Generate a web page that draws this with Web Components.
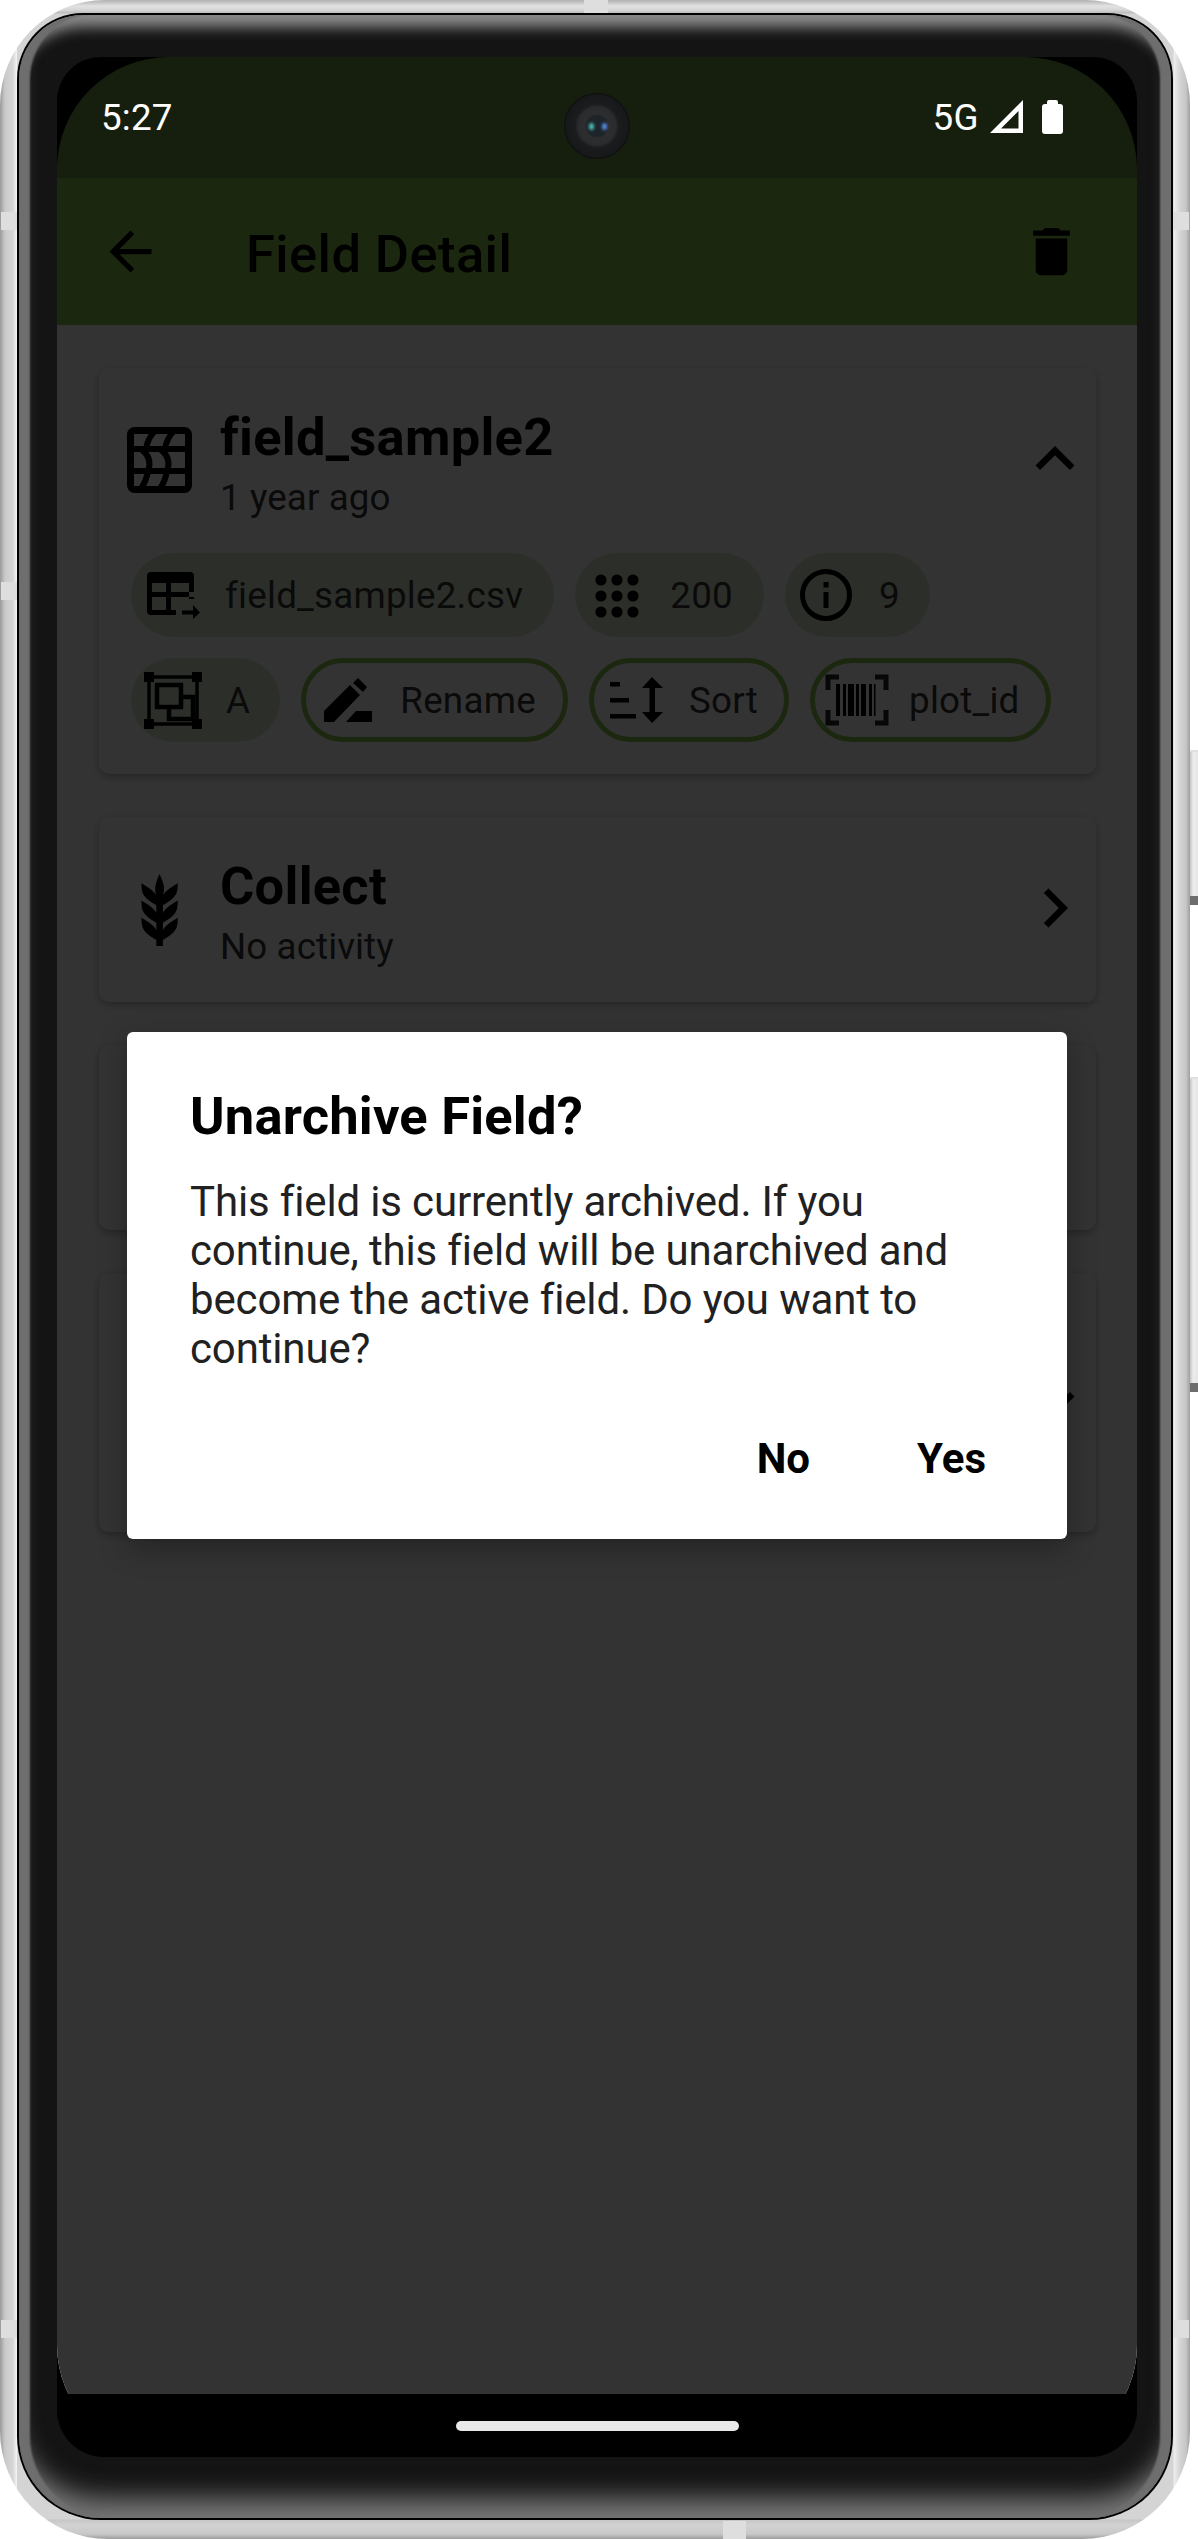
<!DOCTYPE html>
<html lang="en"><head><meta charset="utf-8"><title>Field Detail</title>
<style>
html,body{margin:0;padding:0;background:#fff}
body{width:1198px;height:2539px;overflow:hidden;font-family:Roboto,"Liberation Sans",sans-serif}
</style></head><body>
<phone-frame>
  <status-bar slot="status"></status-bar>
  <app-bar slot="main" heading="Field Detail"></app-bar>
  <page-body slot="main">
    <info-card style="--pt:38px;--pb:32px" icon="field" title-text="field_sample2" sub="1 year ago" trail="up">
      <div style="display:flex;gap:21px">
        <chip-pill style="--l:16px;--g:25px;--r:31px" icon="tablearrow">field_sample2.csv</chip-pill>
        <chip-pill style="--l:20px;--g:30px;--r:31px" icon="dots">200</chip-pill>
        <chip-pill style="--l:15px;--g:27px;--r:30px" icon="info">9</chip-pill>
      </div>
      <div style="display:flex;gap:21px">
        <chip-pill style="--l:13px;--g:24px;--r:30px" icon="select">A</chip-pill>
        <chip-pill outlined style="--l:18px;--g:28px;--r:27px" icon="rename">Rename</chip-pill>
        <chip-pill outlined style="--l:16px;--g:26px;--r:26px" icon="sort">Sort</chip-pill>
        <chip-pill outlined style="--l:10px;--g:20px;--r:26px" icon="barcode">plot_id</chip-pill>
      </div>
    </info-card>
    <info-card class="c" style="--h:185px;--tt:4px" icon="barley" title-text="Collect" sub="No activity" trail="right"></info-card>
    <info-card style="--h:185px"></info-card>
    <info-card style="--h:259px" trail="down"></info-card>
  </page-body>
  <alert-dialog slot="overlay" heading="Unarchive Field?" confirm="Yes" cancel="No">This field is currently archived. If you continue, this field will be unarchived and become the active field. Do you want to continue?</alert-dialog>
</phone-frame>
<script>
const ICONS={
 back:[63,63,'<path transform="scale(2.625)" d="M20 11H7.83l5.59-5.59L12 4l-8 8 8 8 1.41-1.41L7.83 13H20v-2z"/>'],
 trash:[63,63,'<path transform="scale(2.625)" d="M6 19c0 1.1.9 2 2 2h8c1.1 0 2-.9 2-2V7H6v12zM19 4h-3.5l-1-1h-5l-1 1H5v2h14V4z"/>'],
 up:[78,78,'<path transform="scale(3.25)" d="M7.41 15.41L12 10.83l4.59 4.58L18 14l-6-6-6 6z"/>'],
 down:[78,78,'<path transform="scale(3.25)" d="M7.41 8.59L12 13.17l4.59-4.58L18 10l-6 6-6-6z"/>'],
 right:[78,78,'<path transform="scale(3.25)" d="M8.59 16.59L13.17 12 8.59 7.41 10 6l6 6-6 6z"/>'],
 field:[65,66,'<g fill="none" stroke="#000"><rect x="3.500" y="3.500" width="58" height="59" rx="4" stroke-width="7"/><path d="M3 22H62M3 44H62" stroke-width="6"/><path stroke-width="6" d="M19 22C20 15 23 9 28 4M38 22C39 15 42 9 47 4M14 22C22 28 24 36 21 44M33 22C41 28 43 36 40 44M21 44C20 51 17 57 14 62M40 44C39 51 36 57 33 62"/></g>'],
 barley:[79,79,'<path transform="scale(3.3)" d="M7.33,18.33C6.5,17.17 6.5,15.83 6.5,14.5C8.17,15.5 9.83,16.5 10.67,17.67L11,18.23V15.95C9.5,15.05 8.08,14.13 7.33,13.08C6.5,11.92 6.5,10.58 6.5,9.25C8.17,10.25 9.83,11.25 10.67,12.42L11,13V10.7C9.5,9.8 8.08,8.88 7.33,7.83C6.5,6.67 6.5,5.33 6.5,4C8.17,5 9.83,6 10.67,7.17C10.77,7.31 10.86,7.46 10.94,7.62C10.77,7 10.66,6.42 10.65,5.82C10.64,4.31 11.3,2.76 11.96,1.21C12.65,2.69 13.34,4.18 13.35,5.69C13.36,6.32 13.25,6.96 13.07,7.59C13.15,7.45 13.23,7.31 13.33,7.17C14.17,6 15.83,5 17.5,4C17.5,5.33 17.5,6.67 16.67,7.83C15.92,8.88 14.5,9.8 13,10.7V13L13.33,12.42C14.17,11.25 15.83,10.25 17.5,9.25C17.5,10.58 17.5,11.92 16.67,13.08C15.92,14.13 14.5,15.05 13,15.95V18.23L13.33,17.67C14.17,16.5 15.83,15.5 17.5,14.5C17.5,15.83 17.5,17.17 16.67,18.33C15.92,19.38 14.5,20.3 13,21.2V23H11V21.2C9.5,20.3 8.08,19.38 7.33,18.33Z"/>'],
 tablearrow:[53,47,'<path d="M4 0H43A4 4 0 0 1 47 4V27H42V11H24V20H47V25H24V38H29V43H4A4 4 0 0 1 0 39V4A4 4 0 0 1 4 0ZM5 11V20H19V11ZM5 25V38H19V25Z" fill-rule="evenodd"/><path d="M35 38.500H46V33L53 40.500L46 47V42.500H35Z"/>'],
 dots:[45,45,[6,22,38].map(y=>[6,22,38].map(x=>`<circle cx="${x}" cy="${y+1}" r="5.600"/>`).join('')).join('')],
 info:[52,52,'<circle cx="26" cy="26" r="23.500" fill="none" stroke="#000" stroke-width="5"/><rect x="23.500" y="23" width="5" height="16"/><rect x="23.500" y="13" width="5" height="5.500"/>'],
 select:[58,57,'<g fill="none" stroke="#000"><rect x="5" y="5" width="48" height="47" stroke-width="3.500"/><path stroke-width="4.500" d="M13 13H37V35H13ZM25 35V47H49V25H37"/></g><path d="M0 0H10V10H0ZM48 0H58V10H48ZM0 47H10V57H0ZM48 47H58V57H48Z"/>'],
 rename:[48,44,'<path d="M0 44V33L26 7L36 17L10 44ZM29 5L34 0L43 9L39 14ZM22 44L32 33H48V44Z"/>'],
 sort:[53,46,'<path d="M0 5H10V9.500H0ZM0 21H19V25.500H0ZM0 37H26V41.500H0Z"/><path d="M42 0L53 11H45V35H53L42 46L32 35H39.500V11H32Z"/>'],
 barcode:[64,52,'<g fill="none" stroke="#000" stroke-width="5" opacity=".85"><path d="M14 3H3V16M50 3H61V16M14 49H3V36M50 49H61V36"/></g><path d="M11 10H15V42H11ZM18 10H21V42H18ZM23 10H29V42H23ZM31 10H34V42H31ZM36 10H41V42H36ZM44 10H47V42H44ZM49 10H50.500V42H49Z"/>']
};
function def(name,css,html){
  customElements.define(name,class extends HTMLElement{
    constructor(){super();this.attachShadow({mode:'open'})}
    connectedCallback(){this.shadowRoot.innerHTML=`<style>${css}</style>`+(typeof html==='function'?html(this):html);}
  });
}
customElements.define('g-icon',class extends HTMLElement{
  connectedCallback(){
    if(this.shadowRoot)return;
    const [w,h,b]=ICONS[this.getAttribute('name')];
    this.attachShadow({mode:'open'}).innerHTML=`<style>:host{display:block;flex:none;width:${w}px;height:${h}px}svg{display:block;overflow:visible}</style><svg width="${w}" height="${h}" viewBox="0 0 ${w} ${h}" fill="#000">${b}</svg>`;
  }
});
customElements.define('phone-frame',class extends HTMLElement{
  constructor(){super();this.attachShadow({mode:'open'}).innerHTML=`<style>
  :host{display:block;position:relative;width:1198px;height:2539px}
  .silver{box-sizing:border-box;width:1190px;height:2539px;padding:13px 17px 19px 17px;border-radius:105px 105px 108px 108px;
    background:
      linear-gradient(180deg,#b0b0b0 0,#e2e2e2 6px,#d6d6d6 10px,#bcbcbc 13px,transparent 14px),
      linear-gradient(0deg,#9c9c9c 0,#c8c8c8 5px,#d2d2d2 14px,#c6c6c6 19px,transparent 20px),
      linear-gradient(90deg,#9a9a9a 0,#cacaca 5px,#d6d6d6 13px,#f2f2f2 16.500px,#d4d4d4 17px,#d4d4d4 1173px,#eee 1174px,#d4d4d4 1180px,#c6c6c6 1186px,#9e9e9e 1190px)}
  .line{padding:2px;background:#000;border-radius:66px 66px 84px 84px;height:100%;box-sizing:border-box}
  .bezel{box-sizing:border-box;height:100%;padding:42px 34px 61px 38px;background:#141414;border-radius:64px 64px 82px 82px;
    box-shadow:inset 12px 0 2px -1px #6e6e6e,inset -12px 0 2px -1px #6e6e6e,inset 0 20px 14px -8px #8c8c8c,inset 0 -26px 26px -6px #777}
  .panel{width:1080px;height:2400px;background:#000;border-radius:44px 44px 47px 47px;overflow:hidden}
  .display{width:1080px;height:2400px;border-radius:112px;overflow:hidden;display:flex;flex-direction:column;background:#000}
  .main{position:relative;height:2216px;flex:none;display:flex;flex-direction:column;background:#333}
  .scrim{position:absolute;inset:0;background:rgba(0,0,0,.8)}
  .overlay{position:absolute;inset:0;display:flex;align-items:center;justify-content:center}
  .nav{height:63px;flex:none;background:#000;display:flex;justify-content:center;padding-top:27px;box-sizing:border-box}
  .pill{width:283px;height:10px;border-radius:5px;background:#e8e8e8}
  .cam{position:absolute;left:564px;top:93px;width:66px;height:66px;border-radius:50%;background:radial-gradient(circle closest-side,#1b252c 0,#1d2429 30%,#2c2e2f 38%,#292b2c 58%,#1b1c1e 66%,#16181a 94%,#0b0c0d 100%)}
  .cam i{position:absolute;width:5px;height:7px;border-radius:50%;top:30px;filter:blur(1.500px)}
  .cam .a{left:25px;background:#4fc4bb}.cam .b{left:38px;background:#5a8fe8}
  .band{position:absolute;background:#dedede}
  .btn{position:absolute;left:1190px;width:8px;background:linear-gradient(90deg,#c4c4c4,#ececec 40%,#e6e6e6);border-top:2px solid #e0e0e0;border-bottom:9px solid #6d6d6d;box-sizing:border-box}
  </style>
  <div class="silver"><div class="line"><div class="bezel"><div class="panel"><div class="display">
    <slot name="status"></slot>
    <div class="main"><slot name="main"></slot><div class="scrim"></div><div class="overlay"><slot name="overlay"></slot></div></div>
    <div class="nav"><div class="pill"></div></div>
  </div></div></div></div></div>
  <div class="cam"><i class="a"></i><i class="b"></i></div>
  <div class="band" style="left:584px;top:0;width:24px;height:13px"></div>
  <div class="band" style="left:723px;top:2521px;width:23px;height:18px"></div>
  <div class="band" style="left:1px;top:212px;width:16px;height:18px"></div>
  <div class="band" style="left:1px;top:582px;width:16px;height:18px"></div>
  <div class="band" style="left:1px;top:2320px;width:16px;height:18px"></div>
  <div class="band" style="left:1173px;top:212px;width:16px;height:18px"></div>
  <div class="band" style="left:1173px;top:2320px;width:16px;height:18px"></div>
  <div class="btn" style="top:750px;height:155px"></div>
  <div class="btn" style="top:1077px;height:315px"></div>`;}
});
def('status-bar',`:host{display:flex;flex:none;align-items:flex-start;height:121px;background:#161f0d;color:#fff;box-sizing:border-box;padding:39px 74px 0 44px;font:400 36.750px/43px Roboto,sans-serif}
  .t{flex:1;letter-spacing:.2px}.g{letter-spacing:.4px;margin-right:11px}svg{display:block;flex:none}.s{margin-top:4px;margin-right:19px}.b{margin-top:4px}`,
  `<span class="t">5:27</span><span class="g">5G</span>
  <svg class="s" width="33" height="33" viewBox="0 0 33 33"><path d="M33 0V33H0ZM28.500 11L11 28.500H28.500Z" fill="#fff" fill-rule="evenodd"/></svg>
  <svg class="b" width="21" height="34" viewBox="0 0 21 34"><path d="M5 4V2A2 2 0 0 1 7 0H14A2 2 0 0 1 16 2V4H18A3 3 0 0 1 21 7V31A3 3 0 0 1 18 34H3A3 3 0 0 1 0 31V7A3 3 0 0 1 3 4Z" fill="#fff"/></svg>`);
def('app-bar',`:host{display:flex;flex:none;align-items:center;height:147px;background:#8bc34a;color:#000;padding:0 54px 0 42px;box-sizing:border-box;font:500 52.500px/62px Roboto,sans-serif}
  h1{flex:1;margin:5px 0 0 84px;font:inherit;letter-spacing:.4px}`,
  el=>`<g-icon name="back"></g-icon><h1>${el.getAttribute('heading')}</h1><g-icon name="trash"></g-icon>`);
def('page-body',`:host{display:flex;flex-direction:column;gap:43px;padding:43px 41px 0 42px;flex:1;background:#fff}`,`<slot></slot>`);
def('info-card',`:host{display:block;box-sizing:border-box;min-height:var(--h,0);background:#fff;border-radius:10px;box-shadow:0 3px 9px rgba(0,0,0,.28);padding:var(--pt,0) 0 var(--pb,0)}
  .head{display:flex;align-items:center;min-height:var(--h,0);padding:0 2px 0 28px}
  .txt{flex:1;margin-left:28px;margin-top:var(--tt,0)}
  .title{font:700 52.500px/62px Roboto,sans-serif;color:#000;letter-spacing:.25px}
  .sub{font:400 36.750px/43px Roboto,sans-serif;color:#333;margin-top:8px;letter-spacing:.1px}
  .chips{display:flex;flex-direction:column;gap:21px;padding:34px 0 0 32px}
  .lead.field{margin-top:-6px}
  .lead.barley{margin:0 -7px 0 -7px}
  .tr.up{margin-bottom:8px}
  .tr.right{margin-bottom:3px}
  `,
  el=>{const i=el.getAttribute('icon'),t=el.getAttribute('title-text'),s=el.getAttribute('sub'),tr=el.getAttribute('trail');
   const hasChips=el.children.length>0;
   return `<div class="head">${i?`<g-icon class="lead ${i}" name="${i}"></g-icon>`:''}<div class="txt">${t?`<div class="title">${t}</div><div class="sub">${s}</div>`:''}</div>${tr?`<g-icon class="tr ${tr}" name="${tr}"></g-icon>`:''}</div>${hasChips?'<div class="chips"><slot></slot></div>':''}`;});
def('chip-pill',`:host{display:flex;align-items:center;flex:none;box-sizing:border-box;height:84px;border-radius:42px;background:#dce8cc;padding:0 var(--r) 0 var(--l);gap:var(--g);font:400 36.750px/43px Roboto,sans-serif;color:#333;letter-spacing:.25px}
  :host([outlined]){background:#fff;border:5.250px solid #8bc34a}`,
  el=>`<g-icon name="${el.getAttribute('icon')}"></g-icon><span><slot></slot></span>`);
def('alert-dialog',`:host{display:block;position:relative;box-sizing:border-box;width:940px;height:507px;margin-top:-2px;background:#fff;border-radius:6px;padding:53px 81px 0 63px;box-shadow:0 10px 30px rgba(0,0,0,.3);color:#000;font-family:Roboto,sans-serif}
  h2{margin:0;font:700 52.500px/62px Roboto,sans-serif;letter-spacing:.2px}
  p{margin:30px -18px 0 0;font:400 42px/49.200px Roboto,sans-serif;color:#212121;letter-spacing:-.15px}
  .a{display:flex;justify-content:flex-end;gap:107px;margin-top:61px;font:700 42px/49px Roboto,sans-serif}`,
  el=>`<h2>${el.getAttribute('heading')}</h2><p><slot></slot></p><div class="a"><span>${el.getAttribute('cancel')}</span><span>${el.getAttribute('confirm')}</span></div>`);
</script>
</body></html>
